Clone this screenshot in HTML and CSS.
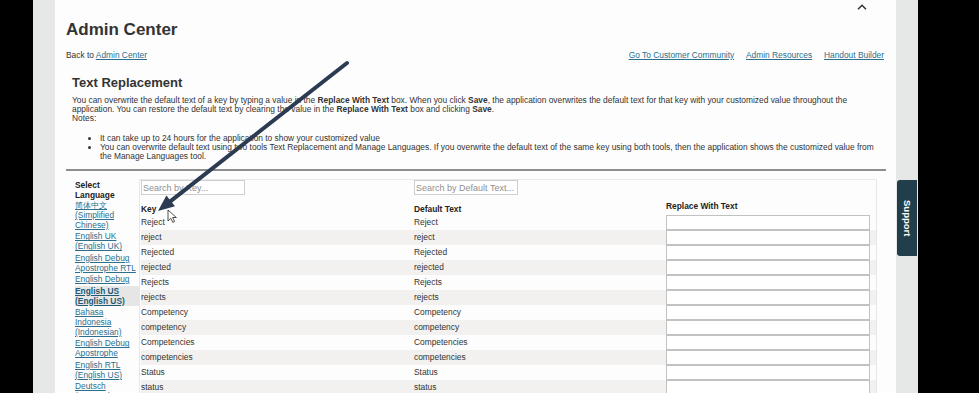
FILE: index.html
```html
<!DOCTYPE html>
<html lang="en">

<head>
    <meta charset="UTF-8">
    <meta name="viewport" content="width=device-width, initial-scale=1.0">
    <title>Admin Center - Text Replacement</title>
    <link rel="stylesheet" href="styles.css">
</head>

<body>
    <div class="screen">
        <div class="edge edge-left"></div>
        <div class="rail"></div>

        <main class="page">
            <div class="topbar">
                <svg class="caret" width="10" height="6" viewBox="0 0 10 6">
                    <polyline points="1,5.2 5,1.2 9,5.2" fill="none" stroke="#333" stroke-width="1.5" />
                </svg>
            </div>

            <h1 class="title">Admin Center</h1>

            <div class="crumbs">
                <div>Back to <a href="#">Admin Center</a></div>
                <nav class="toplinks">
                    <a href="#">Go To Customer Community</a>
                    <a href="#">Admin Resources</a>
                    <a href="#">Handout Builder</a>
                </nav>
            </div>

            <section class="intro">
                <h2>Text Replacement</h2>
                <p>You can overwrite the default text of a key by typing a value in the <b>Replace With Text</b> box. When you click <b>Save</b>, the application overwrites the default text for that key with your customized value throughout the application. You can restore the default text by clearing the value in the <b>Replace With Text</b> box and clicking <b>Save</b>.</p>
                <p class="notes">Notes:</p>
                <ul>
                    <li>It can take up to 24 hours for the application to show your customized value</li>
                    <li>You can overwrite default text using two tools Text Replacement and Manage Languages. If you overwrite the default text of the same key using both tools, then the application shows the customized value from the Manage Languages tool.</li>
                </ul>
            </section>

            <hr class="divider">

            <div class="editor">
                <aside class="langs">
                    <div class="langs-title">Select Language</div>
                    <a class="lang" href="#">简体中文 (Simplified Chinese)</a>
                    <a class="lang" href="#">English UK (English UK)</a>
                    <a class="lang" href="#">English Debug Apostrophe RTL</a>
                    <a class="lang" href="#">English Debug</a>
                    <a class="lang lang-active" href="#">English US (English US)</a>
                    <a class="lang" href="#">Bahasa Indonesia (Indonesian)</a>
                    <a class="lang" href="#">English Debug Apostrophe</a>
                    <a class="lang" href="#">English RTL (English US)</a>
                    <a class="lang" href="#">Deutsch (German)</a>
                </aside>

                <div class="grid">
                    <div class="row row-search">
                        <input class="search" type="text" placeholder="Search by Key...">
                        <input class="search" type="text" placeholder="Search by Default Text...">
                        <span></span>
                    </div>
                    <div class="row row-head">
                        <span>Key</span>
                        <span>Default Text</span>
                        <span class="head-replace">Replace With Text</span>
                    </div>
                    <div class="row"><span>Reject</span><span>Reject</span><input class="replace" type="text"></div>
                    <div class="row"><span>reject</span><span>reject</span><input class="replace" type="text"></div>
                    <div class="row"><span>Rejected</span><span>Rejected</span><input class="replace" type="text"></div>
                    <div class="row"><span>rejected</span><span>rejected</span><input class="replace" type="text"></div>
                    <div class="row"><span>Rejects</span><span>Rejects</span><input class="replace" type="text"></div>
                    <div class="row"><span>rejects</span><span>rejects</span><input class="replace" type="text"></div>
                    <div class="row"><span>Competency</span><span>Competency</span><input class="replace" type="text"></div>
                    <div class="row"><span>competency</span><span>competency</span><input class="replace" type="text"></div>
                    <div class="row"><span>Competencies</span><span>Competencies</span><input class="replace" type="text"></div>
                    <div class="row"><span>competencies</span><span>competencies</span><input class="replace" type="text"></div>
                    <div class="row"><span>Status</span><span>Status</span><input class="replace" type="text"></div>
                    <div class="row"><span>status</span><span>status</span><input class="replace" type="text"></div>
                </div>
            </div>
        </main>

        <div class="rail rail-right">
            <div class="support">Support</div>
        </div>
        <div class="edge"></div>
    </div>

    <!-- annotation drawn over the capture -->
    <svg class="annotation" width="979" height="393" viewBox="0 0 979 393">
        <line x1="347" y1="63" x2="170.6" y2="201.1" stroke="#2b3b52" stroke-width="4" stroke-linecap="round" />
        <polygon points="158,211 175,206.3 166.4,195.6" fill="#2b3b52" />
        <path d="M168 210 L168 221 L170.8 218.3 L172.8 222.4 L174.6 221.5 L172.7 217.5 L176.4 217.5 Z" fill="#fff" stroke="#222" stroke-width="0.8" />
    </svg>
</body>

</html>
```

FILE: styles.css
```css
html,
body {
    margin: 0;
    height: 393px;
    overflow: hidden;
}

body {
    font-family: "Liberation Sans", Arial, sans-serif;
    font-size: 8.4px;
    color: #333;
    background-color: #000;
    position: relative;
}

a {
    color: #2b6f8c;
}

.screen {
    display: flex;
    height: 393px;
}

.edge {
    flex: 1;
    background-color: #000;
}

.edge-left {
    flex: 0 0 33px;
}

.rail {
    flex: 0 0 22px;
    background-color: #e6e8e8;
}

.page {
    flex: 0 0 841px;
    box-sizing: border-box;
    padding: 0 10px 0 11px;
    background-color: #fdfdfd;
    overflow: hidden;
}

.topbar {
    height: 20px;
    display: flex;
    justify-content: flex-end;
    align-items: flex-start;
    padding-right: 19px;
}

.caret {
    margin-top: 4px;
}

.title {
    margin: 0;
    font-size: 17px;
    line-height: 20px;
    color: #333;
}

.crumbs {
    margin-top: 10px;
    line-height: 11px;
    display: flex;
    justify-content: space-between;
}

.toplinks {
    padding-right: 2px;
}

.toplinks a {
    margin-left: 9.5px;
}

.intro {
    padding-left: 6px;
}

.intro h2 {
    margin: 14px 0 0;
    font-size: 13px;
    line-height: 16px;
}

.intro p {
    margin: 5px 0 0;
    line-height: 9px;
}

.intro p.notes {
    margin: 0;
}

.intro ul {
    margin: 11px 0 0;
    padding-left: 28px;
    line-height: 9px;
}

.divider {
    margin: 8px 0 0;
    height: 0;
    border: 0;
    border-top: 2px solid #8e8e8e;
}

.editor {
    margin-top: 8px;
    display: flex;
    align-items: flex-start;
}

.langs {
    flex: 0 0 64px;
    margin-left: 9px;
    padding-top: 2px;
}

.langs-title {
    font-weight: bold;
    line-height: 9.5px;
    color: #222;
}

.lang {
    display: block;
    line-height: 10px;
    margin-bottom: 1.4px;
}

.lang-active {
    font-weight: bold;
    color: #1f5b74;
    background-color: #e6e6e6;
    margin-right: -1px;
}

.grid {
    flex: 1;
    margin-right: 9px;
    border: 1px solid #e8e8e8;
    border-bottom: 0;
    padding-left: 1px;
}

.row {
    display: grid;
    grid-template-columns: 273px 252px 204px;
    height: 15px;
    line-height: 15px;
    white-space: nowrap;
}

.row:nth-child(2n+4) {
    background-color: #f2f1ef;
}

.row-search {
    align-items: start;
}

.row-head {
    height: 20px;
    align-items: end;
    line-height: 11px;
    font-weight: bold;
    color: #222;
}

.head-replace {
    padding-bottom: 3px;
}

input {
    font-family: "Liberation Sans", Arial, sans-serif;
    font-size: 8.4px;
    margin: 0;
    box-sizing: border-box;
    height: 15px;
    background-color: #fff;
    outline: none;
}

.search {
    width: 104px;
    padding: 0 1px;
    border: 1px solid #cfcfcf;
    font-size: 9px;
    color: #555;
}

.search::placeholder {
    color: #8f8f8f;
}

.replace {
    width: 204px;
    border: 1px solid #c2c2c2;
}

.rail-right {
    padding-top: 180px;
    box-sizing: border-box;
}

.support {
    margin-left: 1px;
    width: 20px;
    height: 76px;
    border-radius: 3px 0 0 3px;
    background-color: #213e4a;
    color: #fff;
    font-weight: bold;
    font-size: 9.5px;
    writing-mode: vertical-rl;
    display: flex;
    align-items: center;
    justify-content: center;
}

.annotation {
    position: absolute;
    top: 0;
    left: 0;
    pointer-events: none;
}
```
